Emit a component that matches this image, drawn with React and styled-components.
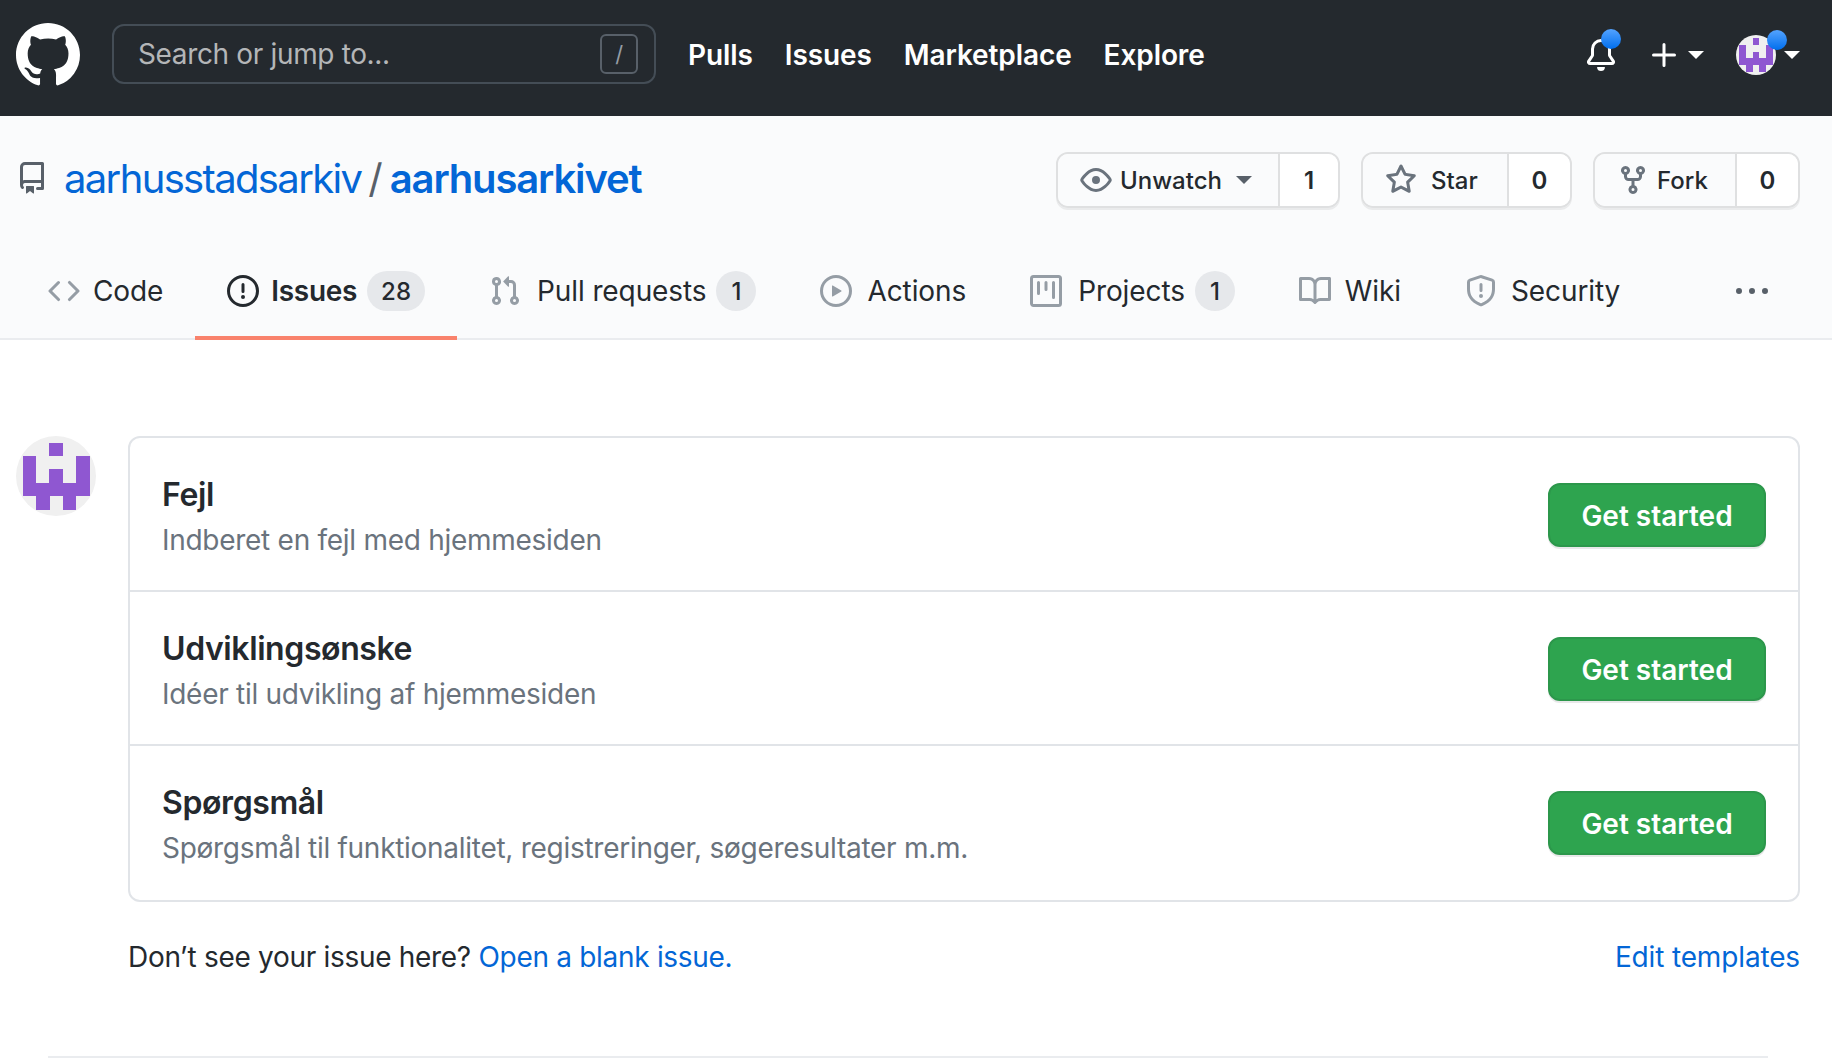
import React from "react";
import styled, { createGlobalStyle } from "styled-components";

const GlobalStyle = createGlobalStyle`
  html, body {
    margin: 0;
    height: 1060px;
    overflow: hidden;
    background: #fff;
    font-family: Inter, "Liberation Sans", sans-serif;
    color: #24292e;
  }
  * { box-sizing: border-box; }
`;

const Header = styled.header`
  height: 116px;
  background: #24292e;
  display: flex;
  align-items: center;
  padding: 0 32px 7px 16px;
  color: #fff;
`;

const Logo = styled.div`
  display: flex;
  margin-right: 32px;
`;

const Search = styled.div`
  width: 544px;
  height: 60px;
  margin: 0 32px 2px 0;
  border: 2px solid #444d56;
  border-radius: 12px;
  display: flex;
  align-items: center;
  justify-content: space-between;
  padding: 0 16px 0 24px;
  font-size: 28px;
  letter-spacing: -0.35px;
  color: #b4b6b8;
`;

const Slash = styled.span`
  width: 38px;
  height: 40px;
  border: 2px solid #586069;
  border-radius: 6px;
  display: flex;
  align-items: center;
  justify-content: center;
  font-size: 22px;
  color: #959da5;
`;

const Nav = styled.nav`
  display: flex;
  gap: 32px;
  font-size: 28px;
  font-weight: 600;
  letter-spacing: -0.1px;
`;

const HeaderRight = styled.div`
  margin-left: auto;
  display: flex;
  align-items: center;
`;

const HeaderItem = styled.div`
  position: relative;
  display: flex;
  align-items: center;
  margin-left: ${(p) => p.$gap || 0}px;
`;

const Dot = styled.span`
  position: absolute;
  top: ${(p) => p.$top}px;
  right: ${(p) => p.$right}px;
  width: 20px;
  height: 20px;
  border-radius: 50%;
  background: #2188ff;
  background-image: linear-gradient(#54a3ff, #006eed);
`;

const Caret = styled.span`
  display: block;
  width: 0;
  height: 0;
  border: 8px solid transparent;
  border-top-color: ${(p) => p.$color || "#fff"};
  border-bottom-width: 0;
  margin-left: ${(p) => p.$gap || 0}px;
`;

const PageHead = styled.div`
  height: 224px;
  background: #fafbfc;
  border-bottom: 2px solid #eaecef;
  padding-top: 36px;
`;

const RepoRow = styled.div`
  display: flex;
  align-items: center;
  justify-content: space-between;
  padding: 0 32px 0 16px;
  height: 56px;
`;

const RepoTitle = styled.h1`
  margin: 0 0 4px;
  display: flex;
  align-items: center;
  font-size: 40px;
  font-weight: 400;
  color: #586069;
  svg {
    color: #586069;
    margin-right: 16px;
  }
`;

const RepoLink = styled.a`
  color: #0366d6;
  font-weight: ${(p) => (p.$strong ? 600 : 400)};
  letter-spacing: ${(p) => (p.$strong ? -1.15 : -1.65)}px;
`;

const TitleSep = styled.span`
  margin: 0 7px;
`;

const Actions = styled.div`
  display: flex;
  gap: 21px;
`;

const ButtonGroup = styled.div`
  display: flex;
  height: 56px;
  border: 2px solid #dfe0e1;
  border-radius: 12px;
  box-shadow: 0 2px 0 rgba(27, 31, 35, 0.07);
  overflow: hidden;
  font-size: 24px;
  font-weight: 500;
`;

const GroupLabel = styled.div`
  width: ${(p) => p.$width}px;
  display: flex;
  align-items: center;
  padding-left: 22px;
  gap: ${(p) => p.$gap}px;
  background: #fafbfc;
  svg {
    color: #6a737d;
  }
`;

const GroupCount = styled.div`
  width: ${(p) => p.$width}px;
  display: flex;
  align-items: center;
  justify-content: center;
  background: #fff;
  border-left: 2px solid #dfe0e1;
  font-weight: 600;
`;

const Tabs = styled.nav`
  display: flex;
  height: 98px;
  margin-top: 34px;
  padding-left: 16px;
  position: relative;
`;

const Tab = styled.a`
  display: flex;
  align-items: center;
  height: 100%;
  padding: 4px 32px 0;
  font-size: 28px;
  font-weight: ${(p) => (p.$active ? 600 : 400)};
  letter-spacing: ${(p) => (p.$active ? -0.3 : -0.1)}px;
  color: #24292e;
  border-bottom: 4px solid ${(p) => (p.$active ? "#f9826c" : "transparent")};
  svg {
    color: ${(p) => (p.$active ? "#24292e" : "#959da5")};
    margin-right: ${(p) => p.$gap}px;
    flex: none;
  }
`;

const Counter = styled.span`
  height: 40px;
  min-width: 40px;
  padding: 0 14px;
  margin-left: 10px;
  border-radius: 40px;
  background: #e6e8eb;
  display: flex;
  align-items: center;
  justify-content: center;
  font-size: 24px;
  font-weight: 500;
  letter-spacing: 0;
`;

const MoreTabs = styled.div`
  position: absolute;
  right: 64px;
  top: 34px;
  color: #586069;
  display: flex;
`;

const Main = styled.main`
  padding: 96px 32px 0 16px;
`;

const Layout = styled.div`
  display: flex;
  align-items: flex-start;
  gap: 32px;
`;

const AvatarCircle = styled.div`
  flex: none;
  width: ${(p) => p.$size}px;
  height: ${(p) => p.$size}px;
  border-radius: 50%;
  overflow: hidden;
  display: flex;
`;

const Column = styled.div`
  flex: 1;
`;

const Card = styled.div`
  border: 2px solid #e1e4e8;
  border-radius: 12px;
  padding-bottom: 2px;
`;

const Row = styled.div`
  height: ${(p) => p.$height}px;
  display: flex;
  align-items: center;
  justify-content: space-between;
  padding: 0 32px;
  & + & {
    border-top: 2px solid #e1e4e8;
  }
`;

const RowBody = styled.div`
  padding-top: 7px;
`;

const RowTitle = styled.div`
  font-size: 32px;
  line-height: 40px;
  font-weight: 600;
  letter-spacing: -0.4px;
`;

const RowText = styled.div`
  font-size: 28px;
  line-height: 40px;
  margin-top: 5px;
  letter-spacing: -0.28px;
  color: #6a737d;
`;

const GreenButton = styled.button`
  width: 218px;
  height: 64px;
  margin-top: 2px;
  padding-top: 2px;
  border: 2px solid #2c974b;
  border-radius: 12px;
  background: #2ea44f;
  color: #fff;
  font: 600 28px Inter, "Liberation Sans", sans-serif;
  box-shadow: 0 2px 0 rgba(27, 31, 35, 0.1);
`;

const Footer = styled.div`
  display: flex;
  justify-content: space-between;
  margin-top: 35px;
  font-size: 28px;
  line-height: 40px;
  letter-spacing: -0.3px;
  a {
    color: #0366d6;
  }
  > a {
    letter-spacing: -0.15px;
  }
`;

const BottomLine = styled.hr`
  margin: 79px 32px 0 32px;
  border: 0;
  border-top: 2px solid #eaecef;
`;

// octicons, 16 x 16 grid
const PATHS = {
  mark: "M8 0C3.58 0 0 3.58 0 8c0 3.54 2.29 6.53 5.47 7.59.4.07.55-.17.55-.38 0-.19-.01-.82-.01-1.49-2.01.37-2.53-.49-2.69-.94-.09-.23-.48-.94-.82-1.13-.28-.15-.68-.52-.01-.53.63-.01 1.08.58 1.23.82.72 1.21 1.87.87 2.33.66.07-.52.28-.87.51-1.07-1.78-.2-3.64-.89-3.64-3.95 0-.87.31-1.59.82-2.15-.08-.2-.36-1.02.08-2.12 0 0 .67-.21 2.2.82.64-.18 1.32-.27 2-.27.68 0 1.36.09 2 .27 1.53-1.04 2.2-.82 2.2-.82.44 1.1.16 1.92.08 2.12.51.56.82 1.27.82 2.15 0 3.07-1.87 3.75-3.65 3.95.29.25.54.73.54 1.48 0 1.07-.01 1.93-.01 2.2 0 .21.15.46.55.38A8.013 8.013 0 0016 8c0-4.42-3.58-8-8-8z",
  bell: "M8 16a2 2 0 001.985-1.75c.017-.137-.097-.25-.235-.25h-3.5c-.138 0-.252.113-.235.25A2 2 0 008 16zM8 1.5A3.5 3.5 0 004.5 5v2.947c0 .346-.102.683-.294.97l-1.703 2.556a.018.018 0 00-.003.01l.001.006c0 .002.002.004.004.006a.017.017 0 00.006.004l.007.001h10.964l.007-.001a.018.018 0 00.006-.004.016.016 0 00.004-.006l.001-.007a.017.017 0 00-.003-.01l-1.703-2.554a1.75 1.75 0 01-.294-.97V5A3.5 3.5 0 008 1.5zM3 5a5 5 0 0110 0v2.947c0 .05.015.098.042.139l1.703 2.555A1.518 1.518 0 0113.482 13H2.518a1.518 1.518 0 01-1.263-2.36l1.703-2.554A.25.25 0 003 7.947V5z",
  plus: "M8 2a.75.75 0 01.75.75v4.5h4.5a.75.75 0 010 1.5h-4.5v4.5a.75.75 0 01-1.5 0v-4.5h-4.5a.75.75 0 010-1.5h4.5v-4.5A.75.75 0 018 2z",
  repo: "M2 2.5A2.5 2.5 0 014.5 0h8.75a.75.75 0 01.75.75v12.5a.75.75 0 01-.75.75h-2.5a.75.75 0 110-1.5h1.75v-2h-8a1 1 0 00-.714 1.7.75.75 0 01-1.072 1.05A2.495 2.495 0 012 11.5v-9zm10.5-1V9h-8c-.356 0-.694.074-1 .208V2.5a1 1 0 011-1h8zM5 12.25v3.25a.25.25 0 00.4.2l1.45-1.087a.25.25 0 01.3 0L8.6 15.7a.25.25 0 00.4-.2v-3.25a.25.25 0 00-.25-.25h-3.5a.25.25 0 00-.25.25z",
  eye: "M1.679 7.932c.412-.621 1.242-1.75 2.366-2.717C5.175 4.242 6.527 3.5 8 3.5c1.473 0 2.824.742 3.955 1.715 1.124.967 1.954 2.096 2.366 2.717a.119.119 0 010 .136c-.412.621-1.242 1.75-2.366 2.717C10.825 11.758 9.473 12.5 8 12.5c-1.473 0-2.824-.742-3.955-1.715C2.92 9.818 2.09 8.69 1.679 8.068a.119.119 0 010-.136zM8 2c-1.981 0-3.67.992-4.933 2.078C1.797 5.169.88 6.423.43 7.1a1.619 1.619 0 000 1.798c.45.678 1.367 1.932 2.637 3.024C4.329 13.008 6.019 14 8 14c1.981 0 3.67-.992 4.933-2.078 1.27-1.091 2.187-2.345 2.637-3.023a1.619 1.619 0 000-1.798c-.45-.678-1.367-1.932-2.637-3.023C11.671 2.992 9.981 2 8 2zm0 8a2 2 0 100-4 2 2 0 000 4z",
  star: "M8 .25a.75.75 0 01.673.418l1.882 3.815 4.21.612a.75.75 0 01.416 1.279l-3.046 2.97.719 4.192a.75.75 0 01-1.088.791L8 12.347l-3.766 1.98a.75.75 0 01-1.088-.79l.72-4.194L.818 6.374a.75.75 0 01.416-1.28l4.21-.611L7.327.668A.75.75 0 018 .25zm0 2.445L6.615 5.5a.75.75 0 01-.564.41l-3.097.45 2.24 2.184a.75.75 0 01.216.664l-.528 3.084 2.769-1.456a.75.75 0 01.698 0l2.77 1.456-.53-3.084a.75.75 0 01.216-.664l2.24-2.183-3.096-.45a.75.75 0 01-.564-.41L8 2.694z",
  fork: "M5 3.25a.75.75 0 11-1.5 0 .75.75 0 011.5 0zm0 2.122a2.25 2.25 0 10-1.5 0v.878A2.25 2.25 0 005.75 8.5h1.5v2.128a2.251 2.251 0 101.5 0V8.5h1.5a2.25 2.25 0 002.25-2.25v-.878a2.25 2.25 0 10-1.5 0v.878a.75.75 0 01-.75.75h-4.5A.75.75 0 015 6.25v-.878zm3.75 7.378a.75.75 0 11-1.5 0 .75.75 0 011.5 0zm3-8.75a.75.75 0 100-1.5.75.75 0 000 1.5z",
  code: "M4.72 3.22a.75.75 0 011.06 1.06L2.06 8l3.72 3.72a.75.75 0 11-1.06 1.06L.47 8.53a.75.75 0 010-1.06l4.25-4.25zm6.56 0a.75.75 0 10-1.06 1.06L13.94 8l-3.72 3.72a.75.75 0 101.06 1.06l4.25-4.25a.75.75 0 000-1.06l-4.25-4.25z",
  issue: "M8 1.5a6.5 6.5 0 100 13 6.5 6.5 0 000-13zM0 8a8 8 0 1116 0A8 8 0 010 8zm9 3a1 1 0 11-2 0 1 1 0 012 0zm-.25-6.25a.75.75 0 00-1.5 0v3.5a.75.75 0 001.5 0v-3.5z",
  pull: "M7.177 3.073L9.573.677A.25.25 0 0110 .854v4.792a.25.25 0 01-.427.177L7.177 3.427a.25.25 0 010-.354zM3.75 2.5a.75.75 0 100 1.5.75.75 0 000-1.5zm-2.25.75a2.25 2.25 0 113 2.122v5.256a2.251 2.251 0 11-1.5 0V5.372A2.25 2.25 0 011.5 3.25zM11 2.5h-1V4h1a1 1 0 011 1v5.628a2.251 2.251 0 101.5 0V5A2.5 2.5 0 0011 2.5zm1 10.25a.75.75 0 111.5 0 .75.75 0 01-1.5 0zM3.75 12a.75.75 0 100 1.5.75.75 0 000-1.5z",
  play: "M1.5 8a6.5 6.5 0 1113 0 6.5 6.5 0 01-13 0zM8 0a8 8 0 100 16A8 8 0 008 0zM6.379 5.227A.25.25 0 006 5.442v5.117a.25.25 0 00.379.214l4.264-2.559a.25.25 0 000-.428L6.379 5.227z",
  project: "M1.75 0A1.75 1.75 0 000 1.75v12.5C0 15.216.784 16 1.75 16h12.5A1.75 1.75 0 0016 14.25V1.75A1.75 1.75 0 0014.25 0H1.75zM1.5 1.75a.25.25 0 01.25-.25h12.5a.25.25 0 01.25.25v12.5a.25.25 0 01-.25.25H1.75a.25.25 0 01-.25-.25V1.75zM11.75 3a.75.75 0 00-.75.75v7.5a.75.75 0 001.5 0v-7.5a.75.75 0 00-.75-.75zm-8.25.75a.75.75 0 011.5 0v5.5a.75.75 0 01-1.5 0v-5.5zM8 3a.75.75 0 00-.75.75v3.5a.75.75 0 001.5 0v-3.5A.75.75 0 008 3z",
  book: "M0 1.75A.75.75 0 01.75 1h4.253c1.227 0 2.317.59 3 1.501A3.744 3.744 0 0111.006 1h4.245a.75.75 0 01.75.75v10.5a.75.75 0 01-.75.75h-4.507a2.25 2.25 0 00-1.591.659l-.622.621a.75.75 0 01-1.06 0l-.622-.621A2.25 2.25 0 005.258 13H.75a.75.75 0 01-.75-.75V1.75zm8.755 3a2.25 2.25 0 012.25-2.25H14.5v9h-3.757c-.71 0-1.4.201-1.992.572l.004-7.322zm-1.504 7.324l.004-5.073-.002-2.253A2.25 2.25 0 005.003 2.5H1.5v9h3.757a3.75 3.75 0 011.994.574z",
  shield: "M7.467.133a1.75 1.75 0 011.066 0l5.25 1.68A1.75 1.75 0 0115 3.48V7c0 1.566-.32 3.182-1.303 4.682-.983 1.498-2.585 2.813-5.032 3.855a1.7 1.7 0 01-1.33 0c-2.447-1.042-4.049-2.357-5.032-3.855C1.32 10.182 1 8.566 1 7V3.48a1.75 1.75 0 011.217-1.667l5.25-1.68zm.61 1.429a.25.25 0 00-.153 0l-5.25 1.68a.25.25 0 00-.174.238V7c0 1.358.275 2.666 1.057 3.86.784 1.194 2.121 2.34 4.366 3.297a.2.2 0 00.154 0c2.245-.956 3.582-2.104 4.366-3.298C13.225 9.666 13.5 8.36 13.5 7V3.48a.25.25 0 00-.174-.237l-5.25-1.68zM9 10.5a1 1 0 11-2 0 1 1 0 012 0zm-.25-5.75a.75.75 0 10-1.5 0v3a.75.75 0 001.5 0v-3z",
  kebab: "M8 9a1.5 1.5 0 100-3 1.5 1.5 0 000 3zM1.5 9a1.5 1.5 0 100-3 1.5 1.5 0 000 3zm13 0a1.5 1.5 0 100-3 1.5 1.5 0 000 3z",
};

const Octicon = ({ name, size = 32 }) => (
  <svg width={size} height={size} viewBox="0 0 16 16" fill="currentColor">
    <path fillRule="evenodd" d={PATHS[name]} />
  </svg>
);

// identicon cells, 5 x 5
const CELLS = [
  [2, 0],
  [0, 1],
  [4, 1],
  [0, 2],
  [2, 2],
  [4, 2],
  [0, 3],
  [1, 3],
  [2, 3],
  [3, 3],
  [4, 3],
  [1, 4],
  [3, 4],
];

const Identicon = ({ size }) => (
  <svg width={size} height={size} viewBox="0 0 6 6" shapeRendering="crispEdges">
    <rect width="6" height="6" fill="#f0f0f0" />
    {CELLS.map(([x, y]) => (
      <rect
        key={`${x}-${y}`}
        x={x + 0.5}
        y={y + 0.5}
        width="1.02"
        height="1.02"
        fill="#8f57d1"
      />
    ))}
  </svg>
);

const TABS = [
  { icon: "code", label: "Code", gap: 13 },
  { icon: "issue", label: "Issues", count: 28, active: true, gap: 12 },
  { icon: "pull", label: "Pull requests", count: 1, gap: 16 },
  { icon: "play", label: "Actions", gap: 15 },
  { icon: "project", label: "Projects", count: 1, gap: 16 },
  { icon: "book", label: "Wiki", gap: 14 },
  { icon: "shield", label: "Security", gap: 14 },
];

const TEMPLATES = [
  { title: "Fejl", text: "Indberet en fejl med hjemmesiden", height: 152 },
  { title: "Udviklingsønske", text: "Idéer til udvikling af hjemmesiden", height: 154 },
  { title: "Spørgsmål", text: "Spørgsmål til funktionalitet, registreringer, søgeresultater m.m.", height: 154 },
];

export default function App() {
  return (
    <>
      <GlobalStyle />
      <Header>
        <Logo>
          <Octicon name="mark" size={64} />
        </Logo>
        <Search>
          Search or jump to...
          <Slash>/</Slash>
        </Search>
        <Nav>
          <span>Pulls</span>
          <span>Issues</span>
          <span>Marketplace</span>
          <span>Explore</span>
        </Nav>
        <HeaderRight>
          <HeaderItem>
            <Octicon name="bell" />
            <Dot $top={-10} $right={-4} />
          </HeaderItem>
          <HeaderItem $gap={31}>
            <Octicon name="plus" />
            <Caret $gap={8} />
          </HeaderItem>
          <HeaderItem $gap={32}>
            <AvatarCircle $size={40}>
              <Identicon size={40} />
            </AvatarCircle>
            <Dot $top={-5} $right={13} />
            <Caret $gap={8} />
          </HeaderItem>
        </HeaderRight>
      </Header>

      <PageHead>
        <RepoRow>
          <RepoTitle>
            <Octicon name="repo" />
            <RepoLink>aarhusstadsarkiv</RepoLink>
            <TitleSep>/</TitleSep>
            <RepoLink $strong>aarhusarkivet</RepoLink>
          </RepoTitle>
          <Actions>
            <ButtonGroup>
              <GroupLabel $width={220} $gap={8}>
                <Octicon name="eye" />
                Unwatch
                <Caret $color="#586069" $gap={6} />
              </GroupLabel>
              <GroupCount $width={60}>1</GroupCount>
            </ButtonGroup>
            <ButtonGroup>
              <GroupLabel $width={144} $gap={14}>
                <Octicon name="star" />
                Star
              </GroupLabel>
              <GroupCount $width={63}>0</GroupCount>
            </ButtonGroup>
            <ButtonGroup>
              <GroupLabel $width={140} $gap={8}>
                <Octicon name="fork" />
                Fork
              </GroupLabel>
              <GroupCount $width={63}>0</GroupCount>
            </ButtonGroup>
          </Actions>
        </RepoRow>
        <Tabs>
          {TABS.map((tab) => (
            <Tab key={tab.label} $active={tab.active} $gap={tab.gap}>
              <Octicon name={tab.icon} />
              {tab.label}
              {tab.count !== undefined && <Counter>{tab.count}</Counter>}
            </Tab>
          ))}
          <MoreTabs>
            <Octicon name="kebab" />
          </MoreTabs>
        </Tabs>
      </PageHead>

      <Main>
        <Layout>
          <AvatarCircle $size={80}>
            <Identicon size={80} />
          </AvatarCircle>
          <Column>
            <Card>
              {TEMPLATES.map((t) => (
                <Row key={t.title} $height={t.height}>
                  <RowBody>
                    <RowTitle>{t.title}</RowTitle>
                    <RowText>{t.text}</RowText>
                  </RowBody>
                  <GreenButton>Get started</GreenButton>
                </Row>
              ))}
            </Card>
            <Footer>
              <span>
                Don’t see your issue here? <a>Open a blank issue.</a>
              </span>
              <a>Edit templates</a>
            </Footer>
          </Column>
        </Layout>
        <BottomLine />
      </Main>
    </>
  );
}
